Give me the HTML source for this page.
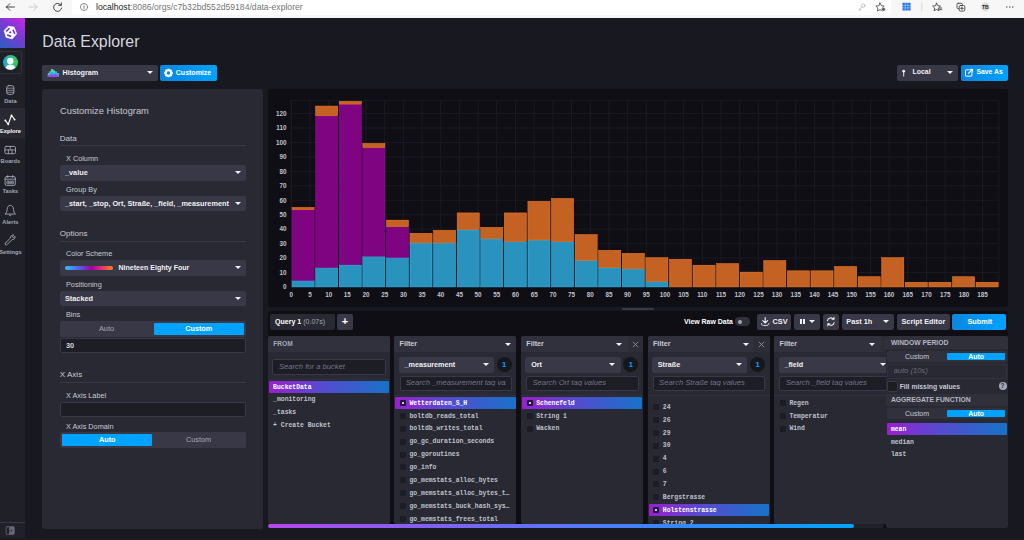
<!DOCTYPE html>
<html><head><meta charset="utf-8"><title>Data Explorer</title>
<style>
*{box-sizing:border-box;margin:0;padding:0}
html,body{width:1024px;height:540px;overflow:hidden;background:#181820;font-family:"Liberation Sans",sans-serif;color:#f1f1f3}
.a{position:absolute}
.t{position:absolute;white-space:nowrap;line-height:1}
.b{font-weight:bold}
.panel{position:absolute;background:#292933;border-radius:2px}
.dd{position:absolute;background:#383846;border-radius:2px}
.caret{position:absolute;width:0;height:0;border-left:3px solid transparent;border-right:3px solid transparent;border-top:3.5px solid #f1f1f3}
.lbl{position:absolute;font-size:7.3px;color:#c6cad3;white-space:nowrap;line-height:1}
.h{position:absolute;font-size:8.1px;color:#c6cad3;white-space:nowrap;line-height:1}
.hr{position:absolute;height:1px;background:#383846;left:60px;width:186px}
.btnb{position:absolute;background:linear-gradient(90deg,#0b86e0,#00a3ff);border-radius:2px}
.btn{position:absolute;background:#383846;border-radius:2px}
.inp{position:absolute;background:#1d1d25;border:1px solid #383846;border-radius:2px}
.mono{font-family:"Liberation Mono",monospace;font-weight:bold;font-size:6.42px;color:#bec2cc}
.sel{position:absolute;background:linear-gradient(90deg,#9a1fd0 0%,#5a48d0 40%,#1673c8 100%);border-radius:1px}
.cb{position:absolute;width:6px;height:6px;background:#1c1c25;border-radius:1px}
.nav{position:absolute;left:-9.6px;width:40px;text-align:center;font-size:5.7px;color:#a4a8b6;font-weight:bold;line-height:1}
.ph{position:absolute;white-space:nowrap;line-height:1;font-style:italic;color:#72748a;font-size:7.6px;overflow:hidden}
.tog{position:absolute;background:#383846;border-radius:2px}
.togon{position:absolute;background:#00a3ff;border-radius:1px}
.ch{position:absolute;background:#31313d;border-radius:2px 2px 0 0}
.ax{font-size:6.3px;font-weight:bold;fill:#c0c4ce;font-family:"Liberation Sans",sans-serif}
</style></head><body>
<div class="a" style="left:0;top:0;width:1024px;height:17.6px;background:#f7f7f7"></div>
<div class="a" style="left:72px;top:0;width:819px;height:15px;background:#fff;border-radius:0 0 3px 3px"></div>
<svg class="a" style="left:0;top:0" width="1024" height="18" viewBox="0 0 1024 18" fill="none" stroke="#333" stroke-width="0.9" stroke-linecap="round" stroke-linejoin="round"><path d="M6.5 7h8M6.5 7l3.3-3.3M6.5 7l3.3 3.3"/><path d="M37 7h-8M37 7l-3.3-3.3M37 7l-3.3 3.3" stroke="#c8c8c8"/><path d="M61 5.2a4 4 0 1 0 0.6 2.8M61.3 2.8v2.6h-2.6"/><circle cx="84" cy="7" r="3.6" stroke="#666" stroke-width="0.7"/><path d="M84 6.4v2.4M84 5v0.1" stroke="#666" stroke-width="0.8"/></svg>
<div class="t" style="left:96px;top:2.8px;font-size:8.64px;color:#1a1a1a">localhost<span style="color:#767676">:8086/orgs/c7b32bd552d59184/data-explorer</span></div>
<div class="a" style="left:0;top:18px;width:25px;height:522px;background:#202028"></div>
<div class="a" style="left:0;top:18px;width:25px;height:30px;background:linear-gradient(40deg,#2a5fc0 0%,#7a3ad0 55%,#c827ea 100%)"></div>
<div class="a" style="left:-1px;top:50.9px;width:22.5px;height:23.5px;border:1px solid #31313d;border-radius:2px;background:#202028"></div>
<div class="a" style="left:2.9px;top:54.9px;width:14.8px;height:14.8px;border-radius:50%;background:linear-gradient(80deg,#1fa6d0 10%,#34c46a 75%)"></div>
<div class="nav" style="top:99.4px;">Data</div>
<div class="a" style="left:0;top:108px;width:25px;height:30px;background:#292933"></div>
<div class="nav" style="top:129.1px;color:#fff;">Explore</div>
<div class="nav" style="top:159.3px;">Boards</div>
<div class="nav" style="top:189.1px;">Tasks</div>
<div class="nav" style="top:219.6px;">Alerts</div>
<div class="nav" style="top:249.8px;">Settings</div>
<div class="a" style="left:0;top:522px;width:25px;height:1px;background:#383846"></div>
<div class="t" id="title" style="left:42.3px;top:33.6px;font-size:15.9px;color:#d4d6dd">Data Explorer</div>
<div class="dd" style="left:42.3px;top:64.9px;width:115.3px;height:16px"></div>
<div class="t b" style="left:62.6px;top:69.2px;font-size:7.2px">Histogram</div>
<div class="caret" style="left:146.5px;top:71.3px"></div>
<div class="btnb" style="left:159.9px;top:64.9px;width:57.1px;height:16px"></div>
<div class="t b" style="left:175.8px;top:69.2px;font-size:7px;color:#fff">Customize</div>
<div class="dd" style="left:897px;top:64.9px;width:61.2px;height:16px"></div>
<div class="t b" style="left:912.6px;top:69.3px;font-size:6.9px">Local</div>
<div class="caret" style="left:947.1px;top:71.3px"></div>
<div class="btnb" style="left:960.9px;top:64.9px;width:46.8px;height:16px"></div>
<div class="t b" style="left:976.5px;top:69.4px;font-size:6.8px;color:#fff">Save As</div>
<div class="panel" style="left:42.2px;top:88.7px;width:220.7px;height:440px;border-radius:3px"></div>
<div class="t" style="left:60px;top:106.6px;font-size:9.3px;color:#c6cad3">Customize Histogram</div>
<div class="h" style="left:59.7px;top:134.7px">Data</div>
<div class="hr" style="top:145.0px"></div>
<div class="lbl" style="left:66px;top:155.2px">X Column</div>
<div class="dd" style="left:60px;top:165.0px;width:186px;height:15.5px"></div>
<div class="t b" style="left:65px;top:169.1px;font-size:7.3px">_value</div>
<div class="caret" style="left:235px;top:171.2px"></div>
<div class="lbl" style="left:66px;top:185.7px">Group By</div>
<div class="dd" style="left:60px;top:195.5px;width:186px;height:15.5px"></div>
<div class="t b" style="left:65px;top:199.6px;font-size:7.3px">_start, _stop, Ort, Straße, _field, _measurement</div>
<div class="caret" style="left:235px;top:201.8px"></div>
<div class="h" style="left:59.7px;top:229.7px">Options</div>
<div class="hr" style="top:240.5px"></div>
<div class="lbl" style="left:66px;top:250.2px">Color Scheme</div>
<div class="dd" style="left:60px;top:260px;width:186px;height:15.5px"></div>
<div class="a" style="left:65px;top:266px;width:48px;height:3.5px;border-radius:2px;background:linear-gradient(90deg,#31c0f6 0%,#5a5ce8 30%,#a500a5 55%,#e03a6a 78%,#ff7e27 100%)"></div>
<div class="t b" style="left:118.5px;top:264.1px;font-size:7.05px">Nineteen Eighty Four</div>
<div class="caret" style="left:235px;top:266.3px"></div>
<div class="lbl" style="left:66px;top:281.2px">Positioning</div>
<div class="dd" style="left:60px;top:290.6px;width:186px;height:15.6px"></div>
<div class="t b" style="left:65px;top:294.7px;font-size:7.3px">Stacked</div>
<div class="caret" style="left:235px;top:296.9px"></div>
<div class="lbl" style="left:66px;top:311.1px">Bins</div>
<div class="tog" style="left:60px;top:321px;width:186px;height:16px"></div>
<div class="togon" style="left:153.5px;top:323px;width:90.5px;height:12px"></div>
<div class="t" style="left:60px;width:93px;text-align:center;top:325.3px;font-size:7.3px;color:#a4a8b6">Auto</div>
<div class="t b" style="left:153.5px;width:90.5px;text-align:center;top:325.3px;font-size:7.3px;color:#fff">Custom</div>
<div class="inp" style="left:60px;top:338px;width:186px;height:14.5px"></div>
<div class="t b" style="left:66px;top:341.8px;font-size:7.3px;color:#d6d8de">30</div>
<div class="h" style="left:59.7px;top:371.2px">X Axis</div>
<div class="hr" style="top:382.0px"></div>
<div class="lbl" style="left:66px;top:391.7px">X Axis Label</div>
<div class="inp" style="left:60px;top:402px;width:186px;height:14.5px"></div>
<div class="lbl" style="left:66px;top:422.7px">X Axis Domain</div>
<div class="tog" style="left:60px;top:432px;width:186px;height:16px"></div>
<div class="togon" style="left:62px;top:434.2px;width:90px;height:12px"></div>
<div class="t b" style="left:62px;width:90.5px;text-align:center;top:436.3px;font-size:7.3px;color:#fff">Auto</div>
<div class="t" style="left:153px;width:91px;text-align:center;top:436.3px;font-size:7.3px;color:#a4a8b6">Custom</div>
<div class="panel" style="left:267.9px;top:88.8px;width:739.8px;height:218px;background:#0f0e15;border-radius:3px"></div>
<svg class="a" style="left:0;top:0" width="1024" height="540" viewBox="0 0 1024 540"><path d="M291.30 100.3V286.9M309.98 100.3V286.9M328.67 100.3V286.9M347.35 100.3V286.9M366.03 100.3V286.9M384.71 100.3V286.9M403.39 100.3V286.9M422.08 100.3V286.9M440.76 100.3V286.9M459.44 100.3V286.9M478.12 100.3V286.9M496.81 100.3V286.9M515.49 100.3V286.9M534.17 100.3V286.9M552.86 100.3V286.9M571.54 100.3V286.9M590.22 100.3V286.9M608.90 100.3V286.9M627.59 100.3V286.9M646.27 100.3V286.9M664.95 100.3V286.9M683.63 100.3V286.9M702.32 100.3V286.9M721.00 100.3V286.9M739.68 100.3V286.9M758.36 100.3V286.9M777.05 100.3V286.9M795.73 100.3V286.9M814.41 100.3V286.9M833.09 100.3V286.9M851.78 100.3V286.9M870.46 100.3V286.9M889.14 100.3V286.9M907.82 100.3V286.9M926.51 100.3V286.9M945.19 100.3V286.9M963.87 100.3V286.9M982.55 100.3V286.9M291.3 286.90H998.9M291.3 272.46H998.9M291.3 258.02H998.9M291.3 243.58H998.9M291.3 229.14H998.9M291.3 214.70H998.9M291.3 200.26H998.9M291.3 185.82H998.9M291.3 171.38H998.9M291.3 156.94H998.9M291.3 142.50H998.9M291.3 128.06H998.9M291.3 113.62H998.9" stroke="#1d1d27" stroke-width="0.8" fill="none"/><rect x="291.3" y="100.3" width="707.6" height="186.6" fill="none" stroke="#1d1d27" stroke-width="0.8"/><rect x="292.05" y="280.65" width="22.09" height="6.25" fill="#2993be" stroke="#31c0f6" stroke-width="0.5"/><rect x="292.05" y="209.90" width="22.09" height="70.51" fill="#7f0481" stroke="#a500a5" stroke-width="0.5"/><rect x="292.05" y="207.44" width="22.09" height="2.20" fill="#c36222" stroke="#ff7e27" stroke-width="0.5"/><rect x="315.64" y="267.80" width="22.09" height="19.10" fill="#2993be" stroke="#31c0f6" stroke-width="0.5"/><rect x="315.64" y="115.89" width="22.09" height="151.66" fill="#7f0481" stroke="#a500a5" stroke-width="0.5"/><rect x="315.64" y="106.07" width="22.09" height="9.57" fill="#c36222" stroke="#ff7e27" stroke-width="0.5"/><rect x="339.22" y="264.91" width="22.09" height="21.99" fill="#2993be" stroke="#31c0f6" stroke-width="0.5"/><rect x="339.22" y="104.34" width="22.09" height="160.32" fill="#7f0481" stroke="#a500a5" stroke-width="0.5"/><rect x="339.22" y="101.31" width="22.09" height="2.78" fill="#c36222" stroke="#ff7e27" stroke-width="0.5"/><rect x="362.81" y="256.39" width="22.09" height="30.51" fill="#2993be" stroke="#31c0f6" stroke-width="0.5"/><rect x="362.81" y="147.80" width="22.09" height="108.34" fill="#7f0481" stroke="#a500a5" stroke-width="0.5"/><rect x="362.81" y="143.47" width="22.09" height="4.08" fill="#c36222" stroke="#ff7e27" stroke-width="0.5"/><rect x="386.40" y="257.69" width="22.09" height="29.21" fill="#2993be" stroke="#31c0f6" stroke-width="0.5"/><rect x="386.40" y="226.94" width="22.09" height="30.51" fill="#7f0481" stroke="#a500a5" stroke-width="0.5"/><rect x="386.40" y="220.15" width="22.09" height="6.54" fill="#c36222" stroke="#ff7e27" stroke-width="0.5"/><rect x="409.98" y="243.11" width="22.09" height="43.79" fill="#2993be" stroke="#31c0f6" stroke-width="0.5"/><rect x="409.98" y="233.29" width="22.09" height="9.57" fill="#c36222" stroke="#ff7e27" stroke-width="0.5"/><rect x="433.57" y="243.11" width="22.09" height="43.79" fill="#2993be" stroke="#31c0f6" stroke-width="0.5"/><rect x="433.57" y="230.40" width="22.09" height="12.46" fill="#c36222" stroke="#ff7e27" stroke-width="0.5"/><rect x="457.16" y="229.97" width="22.09" height="56.93" fill="#2993be" stroke="#31c0f6" stroke-width="0.5"/><rect x="457.16" y="212.93" width="22.09" height="16.79" fill="#c36222" stroke="#ff7e27" stroke-width="0.5"/><rect x="480.74" y="238.92" width="22.09" height="47.98" fill="#2993be" stroke="#31c0f6" stroke-width="0.5"/><rect x="480.74" y="227.37" width="22.09" height="11.30" fill="#c36222" stroke="#ff7e27" stroke-width="0.5"/><rect x="504.33" y="241.81" width="22.09" height="45.09" fill="#2993be" stroke="#31c0f6" stroke-width="0.5"/><rect x="504.33" y="212.93" width="22.09" height="28.63" fill="#c36222" stroke="#ff7e27" stroke-width="0.5"/><rect x="527.92" y="240.22" width="22.09" height="46.68" fill="#2993be" stroke="#31c0f6" stroke-width="0.5"/><rect x="527.92" y="201.38" width="22.09" height="38.59" fill="#c36222" stroke="#ff7e27" stroke-width="0.5"/><rect x="551.50" y="241.81" width="22.09" height="45.09" fill="#2993be" stroke="#31c0f6" stroke-width="0.5"/><rect x="551.50" y="198.49" width="22.09" height="43.07" fill="#c36222" stroke="#ff7e27" stroke-width="0.5"/><rect x="575.09" y="260.58" width="22.09" height="26.32" fill="#2993be" stroke="#31c0f6" stroke-width="0.5"/><rect x="575.09" y="234.59" width="22.09" height="25.74" fill="#c36222" stroke="#ff7e27" stroke-width="0.5"/><rect x="598.68" y="267.80" width="22.09" height="19.10" fill="#2993be" stroke="#31c0f6" stroke-width="0.5"/><rect x="598.68" y="250.33" width="22.09" height="17.22" fill="#c36222" stroke="#ff7e27" stroke-width="0.5"/><rect x="622.26" y="269.10" width="22.09" height="17.80" fill="#2993be" stroke="#31c0f6" stroke-width="0.5"/><rect x="622.26" y="253.36" width="22.09" height="15.49" fill="#c36222" stroke="#ff7e27" stroke-width="0.5"/><rect x="645.85" y="281.81" width="22.09" height="5.09" fill="#2993be" stroke="#31c0f6" stroke-width="0.5"/><rect x="645.85" y="257.69" width="22.09" height="23.86" fill="#c36222" stroke="#ff7e27" stroke-width="0.5"/><rect x="669.44" y="259.28" width="22.09" height="27.62" fill="#c36222" stroke="#ff7e27" stroke-width="0.5"/><rect x="693.02" y="265.20" width="22.09" height="21.70" fill="#c36222" stroke="#ff7e27" stroke-width="0.5"/><rect x="716.61" y="263.61" width="22.09" height="23.29" fill="#c36222" stroke="#ff7e27" stroke-width="0.5"/><rect x="740.20" y="272.13" width="22.09" height="14.77" fill="#c36222" stroke="#ff7e27" stroke-width="0.5"/><rect x="763.78" y="260.58" width="22.09" height="26.32" fill="#c36222" stroke="#ff7e27" stroke-width="0.5"/><rect x="787.37" y="270.83" width="22.09" height="16.07" fill="#c36222" stroke="#ff7e27" stroke-width="0.5"/><rect x="810.96" y="270.83" width="22.09" height="16.07" fill="#c36222" stroke="#ff7e27" stroke-width="0.5"/><rect x="834.54" y="266.50" width="22.09" height="20.40" fill="#c36222" stroke="#ff7e27" stroke-width="0.5"/><rect x="858.13" y="276.75" width="22.09" height="10.15" fill="#c36222" stroke="#ff7e27" stroke-width="0.5"/><rect x="881.72" y="257.69" width="22.09" height="29.21" fill="#c36222" stroke="#ff7e27" stroke-width="0.5"/><rect x="905.30" y="282.24" width="22.09" height="4.66" fill="#c36222" stroke="#ff7e27" stroke-width="0.5"/><rect x="928.89" y="282.24" width="22.09" height="4.66" fill="#c36222" stroke="#ff7e27" stroke-width="0.5"/><rect x="952.48" y="276.75" width="22.09" height="10.15" fill="#c36222" stroke="#ff7e27" stroke-width="0.5"/><rect x="976.06" y="282.24" width="22.09" height="4.66" fill="#c36222" stroke="#ff7e27" stroke-width="0.5"/><text class="ax" x="291.3" y="296.5" text-anchor="middle">0</text><text class="ax" x="310.0" y="296.5" text-anchor="middle">5</text><text class="ax" x="328.7" y="296.5" text-anchor="middle">10</text><text class="ax" x="347.3" y="296.5" text-anchor="middle">15</text><text class="ax" x="366.0" y="296.5" text-anchor="middle">20</text><text class="ax" x="384.7" y="296.5" text-anchor="middle">25</text><text class="ax" x="403.4" y="296.5" text-anchor="middle">30</text><text class="ax" x="422.1" y="296.5" text-anchor="middle">35</text><text class="ax" x="440.8" y="296.5" text-anchor="middle">40</text><text class="ax" x="459.4" y="296.5" text-anchor="middle">45</text><text class="ax" x="478.1" y="296.5" text-anchor="middle">50</text><text class="ax" x="496.8" y="296.5" text-anchor="middle">55</text><text class="ax" x="515.5" y="296.5" text-anchor="middle">60</text><text class="ax" x="534.2" y="296.5" text-anchor="middle">65</text><text class="ax" x="552.9" y="296.5" text-anchor="middle">70</text><text class="ax" x="571.5" y="296.5" text-anchor="middle">75</text><text class="ax" x="590.2" y="296.5" text-anchor="middle">80</text><text class="ax" x="608.9" y="296.5" text-anchor="middle">85</text><text class="ax" x="627.6" y="296.5" text-anchor="middle">90</text><text class="ax" x="646.3" y="296.5" text-anchor="middle">95</text><text class="ax" x="665.0" y="296.5" text-anchor="middle">100</text><text class="ax" x="683.6" y="296.5" text-anchor="middle">105</text><text class="ax" x="702.3" y="296.5" text-anchor="middle">110</text><text class="ax" x="721.0" y="296.5" text-anchor="middle">115</text><text class="ax" x="739.7" y="296.5" text-anchor="middle">120</text><text class="ax" x="758.4" y="296.5" text-anchor="middle">125</text><text class="ax" x="777.0" y="296.5" text-anchor="middle">130</text><text class="ax" x="795.7" y="296.5" text-anchor="middle">135</text><text class="ax" x="814.4" y="296.5" text-anchor="middle">140</text><text class="ax" x="833.1" y="296.5" text-anchor="middle">145</text><text class="ax" x="851.8" y="296.5" text-anchor="middle">150</text><text class="ax" x="870.5" y="296.5" text-anchor="middle">155</text><text class="ax" x="889.1" y="296.5" text-anchor="middle">160</text><text class="ax" x="907.8" y="296.5" text-anchor="middle">165</text><text class="ax" x="926.5" y="296.5" text-anchor="middle">170</text><text class="ax" x="945.2" y="296.5" text-anchor="middle">175</text><text class="ax" x="963.9" y="296.5" text-anchor="middle">180</text><text class="ax" x="982.6" y="296.5" text-anchor="middle">185</text><text class="ax" x="286.5" y="289.1" text-anchor="end">0</text><text class="ax" x="286.5" y="274.7" text-anchor="end">10</text><text class="ax" x="286.5" y="260.2" text-anchor="end">20</text><text class="ax" x="286.5" y="245.8" text-anchor="end">30</text><text class="ax" x="286.5" y="231.3" text-anchor="end">40</text><text class="ax" x="286.5" y="216.9" text-anchor="end">50</text><text class="ax" x="286.5" y="202.5" text-anchor="end">60</text><text class="ax" x="286.5" y="188.0" text-anchor="end">70</text><text class="ax" x="286.5" y="173.6" text-anchor="end">80</text><text class="ax" x="286.5" y="159.1" text-anchor="end">90</text><text class="ax" x="286.5" y="144.7" text-anchor="end">100</text><text class="ax" x="286.5" y="130.3" text-anchor="end">110</text><text class="ax" x="286.5" y="115.8" text-anchor="end">120</text></svg>
<div class="a" style="left:267.9px;top:311px;width:739.8px;height:217.2px;background:#0f0e15;border-radius:2px"></div>
<div class="a" style="left:622px;top:308px;width:32px;height:2.2px;background:#383846;border-radius:1px"></div>
<div class="a" style="left:270px;top:313.5px;width:64.5px;height:16px;background:#292933;border-radius:2px"></div>
<div class="t b" style="left:275px;top:318px;font-size:7.05px;color:#fff">Query 1 <span style="font-weight:normal;color:#a4a8b6">(0.07s)</span></div>
<div class="btn" style="left:337px;top:313.5px;width:16px;height:16px"></div>
<div class="t b" style="left:337px;width:16px;text-align:center;top:315.5px;font-size:11px;color:#fff">+</div>
<div class="t b" style="left:684px;top:318.7px;font-size:6.95px;color:#fff">View Raw Data</div>
<div class="a" style="left:735.3px;top:317.4px;width:15px;height:8.4px;border-radius:4.2px;background:#31313d"></div>
<div class="a" style="left:737.5px;top:319.6px;width:4.2px;height:4.2px;border-radius:50%;background:#a4a8b6"></div>
<div class="btn" style="left:757.3px;top:313.5px;width:34.2px;height:16px"></div>
<div class="t b" style="left:772.5px;top:317.8px;font-size:7.3px;color:#f1f1f3">CSV</div>
<div class="btn" style="left:794.2px;top:313.5px;width:26.2px;height:16px"></div>
<div class="a" style="left:800.1px;top:318.8px;width:1.7px;height:5.5px;background:#f1f1f3"></div><div class="a" style="left:803.1px;top:318.8px;width:1.7px;height:5.5px;background:#f1f1f3"></div>
<div class="caret" style="left:809.4px;top:320px"></div>
<div class="btn" style="left:823.4px;top:313.5px;width:15.5px;height:16px"></div>
<div class="btn" style="left:841.6px;top:313.5px;width:52.7px;height:16px"></div>
<div class="t b" style="left:846.3px;top:317.8px;font-size:7.3px;color:#f1f1f3">Past 1h</div>
<div class="caret" style="left:883px;top:320px"></div>
<div class="btn" style="left:897.3px;top:313.5px;width:52.4px;height:16px"></div>
<div class="t b" style="left:901.5px;top:317.8px;font-size:7.3px;color:#f1f1f3">Script Editor</div>
<div class="btnb" style="left:952.4px;top:313.5px;width:53.4px;height:16px"></div>
<div class="t b" style="left:967.5px;top:317.8px;font-size:7.3px;color:#fff">Submit</div>
<div class="panel" style="left:268.0px;top:336px;width:122.0px;height:188px"></div>
<div class="ch" style="left:268.0px;top:336px;width:122.0px;height:16px"></div>
<div class="t b" style="left:273.3px;top:340.9px;font-size:6.6px;color:#a4a8b6">FROM</div>
<div class="inp" style="left:272.2px;top:359px;width:113.5px;height:15.5px"></div>
<div class="ph" style="left:279px;top:363px">Search for a bucket</div>
<div class="a" style="left:268px;top:378.5px;width:122px;height:1px;background:#31313d"></div>
<div class="sel" style="left:269.0px;top:381.0px;width:120.0px;height:11.5px"></div>
<div class="t mono" style="left:273.1px;top:384.7px;color:#fff;">BucketData</div>
<div class="t mono" style="left:273.1px;top:396.8px;">_monitoring</div>
<div class="t mono" style="left:273.1px;top:409.7px;">_tasks</div>
<div class="t mono" style="left:273.1px;top:422.6px;">+ Create Bucket</div>
<div class="a" style="left:0;top:0;width:516.3px;height:540px;overflow:hidden">
<div class="panel" style="left:394.3px;top:336px;width:122.0px;height:188px"></div>
<div class="ch" style="left:394.3px;top:336px;width:122.0px;height:16px"></div>
<div class="t b" style="left:399.6px;top:340px;font-size:7.2px;color:#c6cad3">Filter</div>
<div class="caret" style="left:505.1px;top:342.5px"></div>
<div class="dd" style="left:398.6px;top:356.5px;width:95.3px;height:16px"></div>
<div class="t b" style="left:404.5px;top:360.8px;font-size:7.2px">_measurement</div>
<div class="caret" style="left:482.5px;top:363px"></div>
<div class="a" style="left:496.7px;top:357px;width:15px;height:15px;border-radius:50%;background:#16161d"></div>
<div class="t b" style="left:496.7px;top:360.6px;width:15px;text-align:center;font-size:7.6px;color:#00a3ff">1</div>
<div class="inp" style="left:399.5px;top:375.5px;width:112.5px;height:15.2px"></div>
<div class="ph" style="left:405.8px;top:378.5px;width:100px">Search _measurement tag values</div>
<div class="a" style="left:394.3px;top:394.5px;width:122px;height:1px;background:#31313d"></div>
<div class="sel" style="left:395.4px;top:397.0px;width:120.2px;height:11.6px"></div>
<div class="cb" style="left:400.0px;top:399.9px;background:#1e1b3a"></div>
<div class="a" style="left:402.1px;top:402.0px;width:1.8px;height:1.8px;background:#fff;border-radius:50%"></div>
<div class="t mono" style="left:409.5px;top:400.6px;color:#fff;">Wetterdaten_S_H</div>
<div class="cb" style="left:400.0px;top:412.8px"></div>
<div class="t mono" style="left:409.5px;top:413.5px;">boltdb_reads_total</div>
<div class="cb" style="left:400.0px;top:425.7px"></div>
<div class="t mono" style="left:409.5px;top:426.4px;">boltdb_writes_total</div>
<div class="cb" style="left:400.0px;top:438.6px"></div>
<div class="t mono" style="left:409.5px;top:439.3px;">go_gc_duration_seconds</div>
<div class="cb" style="left:400.0px;top:451.5px"></div>
<div class="t mono" style="left:409.5px;top:452.2px;">go_goroutines</div>
<div class="cb" style="left:400.0px;top:464.4px"></div>
<div class="t mono" style="left:409.5px;top:465.1px;">go_info</div>
<div class="cb" style="left:400.0px;top:477.3px"></div>
<div class="t mono" style="left:409.5px;top:478.0px;">go_memstats_alloc_bytes</div>
<div class="cb" style="left:400.0px;top:490.2px"></div>
<div class="t mono" style="left:409.5px;top:490.9px;">go_memstats_alloc_bytes_t…</div>
<div class="cb" style="left:400.0px;top:503.1px"></div>
<div class="t mono" style="left:409.5px;top:503.8px;">go_memstats_buck_hash_sys…</div>
<div class="cb" style="left:400.0px;top:516.0px"></div>
<div class="t mono" style="left:409.5px;top:516.7px;">go_memstats_frees_total</div>
</div>
<div class="a" style="left:0;top:0;width:643.0px;height:540px;overflow:hidden">
<div class="panel" style="left:521.0px;top:336px;width:122.0px;height:188px"></div>
<div class="ch" style="left:521.0px;top:336px;width:122.0px;height:16px"></div>
<div class="t b" style="left:526.3px;top:340px;font-size:7.2px;color:#c6cad3">Filter</div>
<div class="caret" style="left:615.9px;top:342.5px"></div>
<div class="a" style="left:627.5px;top:336px;width:15.5px;height:16px;background:#2d2d38;border-radius:0 2px 0 0"></div>
<svg class="a" style="left:631.5px;top:340.5px" width="7" height="7" viewBox="0 0 7 7"><path d="M0.8 0.8L6.2 6.2M6.2 0.8L0.8 6.2" stroke="#8e91a1" stroke-width="0.9"/></svg>
<div class="dd" style="left:525.3px;top:356.5px;width:95.3px;height:16px"></div>
<div class="t b" style="left:531.2px;top:360.8px;font-size:7.2px">Ort</div>
<div class="caret" style="left:609.2px;top:363px"></div>
<div class="a" style="left:623.4px;top:357px;width:15px;height:15px;border-radius:50%;background:#16161d"></div>
<div class="t b" style="left:623.4px;top:360.6px;width:15px;text-align:center;font-size:7.6px;color:#00a3ff">1</div>
<div class="inp" style="left:526.2px;top:375.5px;width:112.5px;height:15.2px"></div>
<div class="ph" style="left:532.5px;top:378.5px;width:100px">Search Ort tag values</div>
<div class="a" style="left:521.0px;top:394.5px;width:122px;height:1px;background:#31313d"></div>
<div class="sel" style="left:522.1px;top:397.0px;width:120.2px;height:11.6px"></div>
<div class="cb" style="left:526.7px;top:399.9px;background:#1e1b3a"></div>
<div class="a" style="left:528.8px;top:402.0px;width:1.8px;height:1.8px;background:#fff;border-radius:50%"></div>
<div class="t mono" style="left:536.2px;top:400.6px;color:#fff;">Schenefeld</div>
<div class="cb" style="left:526.7px;top:412.8px"></div>
<div class="t mono" style="left:536.2px;top:413.5px;">String 1</div>
<div class="cb" style="left:526.7px;top:425.7px"></div>
<div class="t mono" style="left:536.2px;top:426.4px;">Wacken</div>
</div>
<div class="a" style="left:0;top:0;width:769.6px;height:540px;overflow:hidden">
<div class="panel" style="left:647.6px;top:336px;width:122.0px;height:188px"></div>
<div class="ch" style="left:647.6px;top:336px;width:122.0px;height:16px"></div>
<div class="t b" style="left:652.9px;top:340px;font-size:7.2px;color:#c6cad3">Filter</div>
<div class="caret" style="left:742.5px;top:342.5px"></div>
<div class="a" style="left:754.1px;top:336px;width:15.5px;height:16px;background:#2d2d38;border-radius:0 2px 0 0"></div>
<svg class="a" style="left:758.1px;top:340.5px" width="7" height="7" viewBox="0 0 7 7"><path d="M0.8 0.8L6.2 6.2M6.2 0.8L0.8 6.2" stroke="#8e91a1" stroke-width="0.9"/></svg>
<div class="dd" style="left:651.9px;top:356.5px;width:95.3px;height:16px"></div>
<div class="t b" style="left:657.8px;top:360.8px;font-size:7.2px">Straße</div>
<div class="caret" style="left:735.8px;top:363px"></div>
<div class="a" style="left:750.0px;top:357px;width:15px;height:15px;border-radius:50%;background:#16161d"></div>
<div class="t b" style="left:750.0px;top:360.6px;width:15px;text-align:center;font-size:7.6px;color:#00a3ff">1</div>
<div class="inp" style="left:652.8px;top:375.5px;width:112.5px;height:15.2px"></div>
<div class="ph" style="left:659.1px;top:378.5px;width:100px">Search Straße tag values</div>
<div class="a" style="left:647.6px;top:394.5px;width:122px;height:1px;background:#31313d"></div>
</div>
<div class="cb" style="left:653.3px;top:404.0px"></div>
<div class="t mono" style="left:662.8px;top:404.7px;">24</div>
<div class="cb" style="left:653.3px;top:416.9px"></div>
<div class="t mono" style="left:662.8px;top:417.6px;">26</div>
<div class="cb" style="left:653.3px;top:429.8px"></div>
<div class="t mono" style="left:662.8px;top:430.5px;">29</div>
<div class="cb" style="left:653.3px;top:442.7px"></div>
<div class="t mono" style="left:662.8px;top:443.4px;">30</div>
<div class="cb" style="left:653.3px;top:455.6px"></div>
<div class="t mono" style="left:662.8px;top:456.3px;">4</div>
<div class="cb" style="left:653.3px;top:468.5px"></div>
<div class="t mono" style="left:662.8px;top:469.2px;">6</div>
<div class="cb" style="left:653.3px;top:481.4px"></div>
<div class="t mono" style="left:662.8px;top:482.1px;">7</div>
<div class="cb" style="left:653.3px;top:494.3px"></div>
<div class="t mono" style="left:662.8px;top:495.0px;">Bergstrasse</div>
<div class="sel" style="left:648.7px;top:504.3px;width:120.2px;height:11.6px"></div>
<div class="cb" style="left:653.3px;top:507.2px;background:#1e1b3a"></div>
<div class="a" style="left:655.4px;top:509.3px;width:1.8px;height:1.8px;background:#fff;border-radius:50%"></div>
<div class="t mono" style="left:662.8px;top:507.9px;color:#fff;">Holstenstrasse</div>
<div class="cb" style="left:653.3px;top:520.1px"></div>
<div class="t mono" style="left:662.8px;top:520.8px;">String 2</div>
<div class="a" style="left:0;top:0;width:885.8px;height:540px;overflow:hidden">
<div class="panel" style="left:774.2px;top:336px;width:122.0px;height:188px"></div>
<div class="ch" style="left:774.2px;top:336px;width:122.0px;height:16px"></div>
<div class="t b" style="left:779.5px;top:340px;font-size:7.2px;color:#c6cad3">Filter</div>
<div class="caret" style="left:869.1px;top:342.5px"></div>
<div class="a" style="left:880.7px;top:336px;width:15.5px;height:16px;background:#2d2d38;border-radius:0 2px 0 0"></div>
<svg class="a" style="left:884.7px;top:340.5px" width="7" height="7" viewBox="0 0 7 7"><path d="M0.8 0.8L6.2 6.2M6.2 0.8L0.8 6.2" stroke="#8e91a1" stroke-width="0.9"/></svg>
<div class="dd" style="left:778.5px;top:356.5px;width:112.8px;height:16px"></div>
<div class="t b" style="left:784.4px;top:360.8px;font-size:7.2px">_field</div>
<div class="caret" style="left:879.9px;top:363px"></div>
<div class="inp" style="left:779.4px;top:375.5px;width:112.5px;height:15.2px"></div>
<div class="ph" style="left:785.7px;top:378.5px;width:100px">Search _field tag values</div>
<div class="a" style="left:774.2px;top:394.5px;width:122px;height:1px;background:#31313d"></div>
<div class="cb" style="left:779.9px;top:399.9px"></div>
<div class="t mono" style="left:789.4px;top:400.6px;">Regen</div>
<div class="cb" style="left:779.9px;top:412.8px"></div>
<div class="t mono" style="left:789.4px;top:413.5px;">Temperatur</div>
<div class="cb" style="left:779.9px;top:425.7px"></div>
<div class="t mono" style="left:789.4px;top:426.4px;">Wind</div>
</div>
<div class="panel" style="left:885.8px;top:336px;width:122px;height:192.3px"></div>
<div class="a" style="left:885.8px;top:336px;width:122px;height:12.5px;background:#30303b;border-radius:2px 2px 0 0"></div>
<div class="a" style="left:885.8px;top:393.9px;width:122px;height:12px;background:#30303b"></div>
<div class="t b" style="left:890.9px;top:339.9px;font-size:6.75px;color:#b4b8c4">WINDOW PERIOD</div>
<div class="tog" style="left:886.7px;top:351.3px;width:120px;height:10.5px;background:#31313d"></div>
<div class="togon" style="left:947.2px;top:353.0px;width:58px;height:7.2px"></div>
<div class="t" style="left:887px;width:60px;text-align:center;top:353.3px;font-size:7px;color:#c6cad3">Custom</div>
<div class="t b" style="left:947.2px;width:58px;text-align:center;top:353.3px;font-size:7px;color:#fff">Auto</div>
<div class="inp" style="left:886.7px;top:363.7px;width:120px;height:15px;background:#292933;border-color:#31313d"></div>
<div class="ph" style="left:893.5px;top:367.3px;color:#696b7b">auto (10s)</div>
<div class="a" style="left:887.3px;top:381.4px;width:10.3px;height:10.3px;background:#1c1c21;border:1px solid #383846;border-radius:2px"></div>
<div class="t b" style="left:899.7px;top:383.5px;font-size:6.8px;color:#c6cad3">Fill missing values</div>
<div class="a" style="left:998.5px;top:382.3px;width:8px;height:8px;border-radius:50%;background:#a4a8b6"></div>
<div class="t b" style="left:998.5px;width:8px;text-align:center;top:383.3px;font-size:6.5px;color:#292933">?</div>
<div class="t b" style="left:890.9px;top:396.7px;font-size:6.75px;color:#b4b8c4">AGGREGATE FUNCTION</div>
<div class="tog" style="left:886.7px;top:408.3px;width:120px;height:10.5px;background:#31313d"></div>
<div class="togon" style="left:947.2px;top:410.0px;width:58px;height:7.2px"></div>
<div class="t" style="left:887px;width:60px;text-align:center;top:410.3px;font-size:7px;color:#c6cad3">Custom</div>
<div class="t b" style="left:947.2px;width:58px;text-align:center;top:410.3px;font-size:7px;color:#fff">Auto</div>
<div class="sel" style="left:886.7px;top:423.2px;width:120.2px;height:11.9px"></div>
<div class="t mono" style="left:890.9px;top:426.9px;color:#fff;">mean</div>
<div class="t mono" style="left:890.9px;top:439.5px;">median</div>
<div class="t mono" style="left:890.9px;top:452.4px;">last</div>
<div class="a" style="left:268px;top:524.2px;width:615.6px;height:3.6px;background:#202028;border-radius:2px"></div>
<div class="a" style="left:268px;top:524.2px;width:586.4px;height:3.6px;background:linear-gradient(90deg,#b548ec,#00a3ff);border-radius:2px"></div>
<svg class="a" style="left:0;top:0" width="1024" height="540" viewBox="0 0 1024 540" fill="none" stroke-linecap="round" stroke-linejoin="round"><path d="M8.600 26.300L14.100 27.100L16.700 33.800L12.200 38.900L6.100 37.300L4.100 30.800Z" fill="#fff" stroke="#fff" stroke-width="0.600"/><g stroke="#5d34c6" stroke-width="1.600" stroke-linecap="butt"><path d="M6.200 31.500L9.500 28.300"/><path d="M12.900 29.700L14.800 33.800" stroke="#7a32cc"/><path d="M7.200 34.900L11.200 36.500" stroke="#4f38c0"/></g><path d="M10.200 30.800L11.600 33.300L8.800 33.000Z" fill="#6a33c8" stroke="none"/><clipPath id="av"><circle cx="10.3" cy="62.3" r="7.4"/></clipPath><g clip-path="url(#av)" fill="#fff" stroke="none"><circle cx="10.300" cy="61.000" r="3.200"/><ellipse cx="10.400" cy="68.900" rx="5.000" ry="4.500"/></g><g stroke="#a4a8b6" stroke-width="0.9"><rect x="6.7" y="85.6" width="7.2" height="8.8" rx="2.2"/><path d="M6.9 88.2h6.8M6.9 90.3h6.8M6.9 92.3h6.8" stroke-width="0.7"/></g><g stroke="#fff" stroke-width="1.1"><path d="M5.3 120.4L8.3 124.3L11.5 115.3L14.6 119.6"/></g><g fill="#fff"><circle cx="5.3" cy="120.4" r="0.9"/><circle cx="8.3" cy="124.3" r="0.9"/><circle cx="11.5" cy="115.3" r="0.9"/><circle cx="14.6" cy="119.6" r="0.9"/></g><g stroke="#a4a8b6" stroke-width="0.9"><rect x="4.9" y="146.4" width="10.6" height="7.3" rx="1.3"/><path d="M4.9 149.9h10.6M8.4 149.9v3.8M12 149.9v3.8M10.2 146.4v3.5" stroke-width="0.8"/></g><g stroke="#a4a8b6" stroke-width="0.9"><rect x="5.1" y="176.6" width="10.2" height="8.8" rx="1.3"/><path d="M5.1 179.2h10.2M7.7 175.6v1.8M12.7 175.6v1.8" /><path d="M7.3 181h1.6v2.8h-1.6zM10 181h1.2v2.8h-1.2zM12.2 181h1.2v2.8h-1.2z" stroke-width="0.6" fill="#a4a8b6" fill-opacity="0.5"/></g><g stroke="#a4a8b6" stroke-width="0.9"><path d="M5.3 213.8c1.6-1.2 1.6-2.6 1.8-4.6c0.2-2.2 1.4-3.8 3.2-3.8s3 1.6 3.2 3.8c0.2 2 0.2 3.400 1.8 4.600z"/><path d="M9.300 215.100a1.100 1.100 0 0 0 2.000 0"/></g><g stroke="#a4a8b6" stroke-width="0.9"><path d="M5.500 243.000l5.000-5.000a2.600 2.600 0 0 1 3.300-2.900l-1.600 1.600l1.200 1.200l1.600-1.600a2.600 2.600 0 0 1-2.900 3.300l-5.000 5.000a1.100 1.100 0 0 1-1.600-1.600z"/></g><rect x="6.1" y="526.7" width="8.1" height="7.7" rx="1" stroke="#676978" stroke-width="0.8"/><rect x="9.2" y="526.7" width="5" height="7.700" fill="#676978" stroke="none"/><path d="M10.800 529.200l1.600 1.400l-1.600 1.400z" fill="#202028" stroke="none"/><g stroke="none"><path d="M47.800 76.700v-3.800h1.600v-1.600h1.600v-2.300h2.200v1.200h1.800v1.200h2.000v1.500h1.800v3.800z" fill="#4ed8a0"/><path d="M47.800 76.700v-2.300h1.600v-1.300h1.900v-1.000h1.900v1.200h1.800v-1.100h1.800v1.600h2.000v2.900z" fill="#22adf6"/><path d="M47.800 76.700v-1.300h2.400v-1.000h2.200v0.900h2.000v-0.900h2.000v1.000h2.400v1.300z" fill="#be2ee4"/></g><path d="M172.79 72.04L172.79 73.96L171.40 74.58L171.67 73.93L172.22 75.36L170.86 76.72L169.43 76.17L170.08 75.90L169.46 77.29L167.54 77.29L166.92 75.90L167.57 76.17L166.14 76.72L164.78 75.36L165.33 73.93L165.60 74.58L164.21 73.96L164.21 72.04L165.60 71.42L165.33 72.07L164.78 70.64L166.14 69.28L167.57 69.83L166.92 70.10L167.54 68.71L169.46 68.71L170.08 70.10L169.43 69.83L170.86 69.28L172.22 70.64L171.67 72.07L171.40 71.42Z M170.3 73a1.800 1.800 0 1 0-3.600 0a1.800 1.800 0 1 0 3.600 0Z" fill="#fff" fill-rule="evenodd" stroke="none"/><circle cx="903.7" cy="71.2" r="1.400" fill="#f1f1f3"/><path d="M903.700 72v4.200" stroke="#f1f1f3" stroke-width="0.9"/><g stroke="#fff" stroke-width="1"><path d="M969.200 69.800h-3.000a0.700 0.700 0 0 0-0.700 0.700v5.000a0.700 0.700 0 0 0 0.700 0.700h5.000a0.700 0.700 0 0 0 0.700-0.700v-3.000"/><path d="M968.500 73.300l3.800-3.800" stroke-width="1.200"/><path d="M970.200 69.300h2.600v2.600z" fill="#fff" stroke-width="0.500"/></g><g stroke="#f1f1f3" stroke-width="1.1"><path d="M765.2 317.500v5.200M762.800 320.600l2.400 2.400l2.400-2.400"/><path d="M761.500 323.600c0 1.600 1.200 1.900 3.700 1.900s3.700-0.300 3.700-1.900" stroke-width="0.900"/></g><g stroke="#f1f1f3" stroke-width="1.1"><path d="M827.500 320.700a3.400 3.400 0 0 1 6.000-1.500M834.200 322.500a3.400 3.400 0 0 1-6.000 1.500"/><path d="M834.300 317.200v2.400h-2.400zM827.500 326.000v-2.400h2.400z" fill="#f1f1f3" stroke-width="0.400"/></g><g stroke="#bdbdbd" stroke-width="0.9"><circle cx="863.200" cy="5.600" r="1.700"/><path d="M862.000 6.800l-3.200 3.200h1.600v-1.200"/></g><g stroke="#444" stroke-width="0.8"><path d="M880.000 3.000l1.300 2.700l2.900 0.400l-2.100 2.000l0.500 2.900l-2.600-1.400l-2.600 1.400l0.500-2.900l-2.100-2.000l2.900-0.400z"/><circle cx="883.600" cy="9.300" r="1.900" fill="#555" stroke="#fff" stroke-width="0.500"/></g><rect x="902.500" y="2.800" width="8.100" height="7.700" fill="#1b74e8" stroke="none"/><path d="M905.200 2.800v7.700M907.900 2.800v7.700M902.500 5.400h8.100M902.500 7.900h8.100" stroke="#cfe3ff" stroke-width="0.500"/><path d="M921.800 3.000v8.000" stroke="#d0d0d0" stroke-width="0.800"/><g stroke="#333" stroke-width="0.800"><path d="M936.600 3.200l1.200 2.500l2.700 0.400l-2.000 1.900l0.500 2.700l-2.400-1.300l-2.400 1.300l0.500-2.700l-2.000-1.900l2.700-0.400z"/><path d="M939.200 8.000h2.600M939.600 9.600h2.200"/></g><g stroke="#333" stroke-width="0.800"><rect x="957.000" y="3.300" width="5.400" height="5.400" rx="1.200"/><rect x="959.200" y="5.500" width="5.600" height="5.600" rx="1.200" fill="#f7f7f7"/><path d="M962.000 6.900v2.800M960.600 8.300h2.800"/></g><circle cx="985.300" cy="6.900" r="4.300" fill="#dcdcdc" stroke="none"/><text x="985.300" y="8.800" text-anchor="middle" font-family="Liberation Sans, sans-serif" font-weight="bold" font-size="5px" fill="#222" stroke="none">TB</text><g fill="#444" stroke="none"><circle cx="1006.800" cy="7.000" r="0.700"/><circle cx="1009.800" cy="7.000" r="0.700"/><circle cx="1012.800" cy="7.000" r="0.700"/></g></svg>
<div class="a" style="left:0;top:537.6px;width:1024px;height:3px;background:#1c1c1e"></div>
</body></html>
